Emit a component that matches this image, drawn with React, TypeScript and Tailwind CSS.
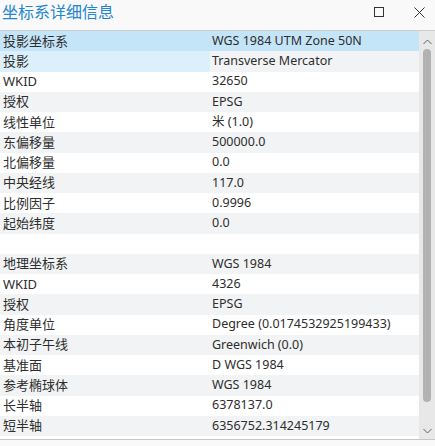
import React from 'react';

type Row = { label: string; value: string };

const rows: Row[] = [
  { label: '投影坐标系', value: 'WGS 1984 UTM Zone 50N' },
  { label: '投影', value: 'Transverse Mercator' },
  { label: 'WKID', value: '32650' },
  { label: '授权', value: 'EPSG' },
  { label: '线性单位', value: '米 (1.0)' },
  { label: '东偏移量', value: '500000.0' },
  { label: '北偏移量', value: '0.0' },
  { label: '中央经线', value: '117.0' },
  { label: '比例因子', value: '0.9996' },
  { label: '起始纬度', value: '0.0' },
  { label: '', value: '' },
  { label: '地理坐标系', value: 'WGS 1984' },
  { label: 'WKID', value: '4326' },
  { label: '授权', value: 'EPSG' },
  { label: '角度单位', value: 'Degree (0.0174532925199433)' },
  { label: '本初子午线', value: 'Greenwich (0.0)' },
  { label: '基准面', value: 'D WGS 1984' },
  { label: '参考椭球体', value: 'WGS 1984' },
  { label: '长半轴', value: '6378137.0' },
  { label: '短半轴', value: '6356752.314245179' },
];

const font = { fontFamily: '"Noto Sans", "Noto Sans CJK SC", sans-serif' };

export default function App() {
  return (
    <div className="w-[435px] h-[446px] bg-[#f9f9f9] flex flex-col overflow-hidden text-[#2e2e2e]" style={font}>
      {/* title bar */}
      <div className="h-[31px] flex items-center justify-between shrink-0 border-b border-[#cdcdcd]">
        <span className="pl-[2px] text-[16px] text-[#2286d0] leading-none -mt-[6px]">坐标系详细信息</span>
        <div className="flex items-center gap-[30px] pr-[10px] -mt-[6px]">
          <div className="w-[10px] h-[10px] border border-[#333]" />
          <svg width="11" height="11" viewBox="0 0 11 11" className="text-[#333]">
            <path d="M0.5 0.5 L10.5 10.5 M10.5 0.5 L0.5 10.5" stroke="currentColor" strokeWidth="1" />
          </svg>
        </div>
      </div>

      {/* table + scrollbar */}
      <div className="flex h-[409px] shrink-0 border-b border-[#c6c6c6] bg-white">
        <div className="flex-1 flex flex-col">
          {rows.map((r, i) => {
            const selected = i === 0;
            const striped = i % 2 === 1;
            const rowBg = selected ? 'bg-[#c4e5f8]' : striped ? 'bg-[#f2f3f4]' : 'bg-white';
            const labelBg = i === 1 ? 'bg-[#dcf0fb]' : '';
            return (
              <div key={i} className={`h-[20.25px] flex items-center leading-none ${rowBg}`}>
                <div className={`w-[210px] h-full flex items-center pl-[3px] text-[13px] ${labelBg}`}>{r.label}</div>
                <div className="pl-[2px] flex-1 whitespace-nowrap text-[12.5px]">{r.value}</div>
              </div>
            );
          })}
        </div>
        <div className="w-[16px] bg-[#e8e8e8] flex flex-col items-center">
          <svg width="9" height="6" viewBox="0 0 9 6" className="mt-[8px] text-[#606060]">
            <path d="M0.5 5 L4.5 1 L8.5 5" fill="none" stroke="currentColor" strokeWidth="1" />
          </svg>
          <div className="w-[8px] h-[353px] mt-[4px] rounded-[4px] bg-[#b2b2b2]" />
          <div className="flex-1" />
          <svg width="9" height="6" viewBox="0 0 9 6" className="mb-[5px] text-[#606060]">
            <path d="M0.5 1 L4.5 5 L8.5 1" fill="none" stroke="currentColor" strokeWidth="1" />
          </svg>
        </div>
      </div>
      <div className="flex-1 bg-[#f9f9f9]" />
    </div>
  );
}
